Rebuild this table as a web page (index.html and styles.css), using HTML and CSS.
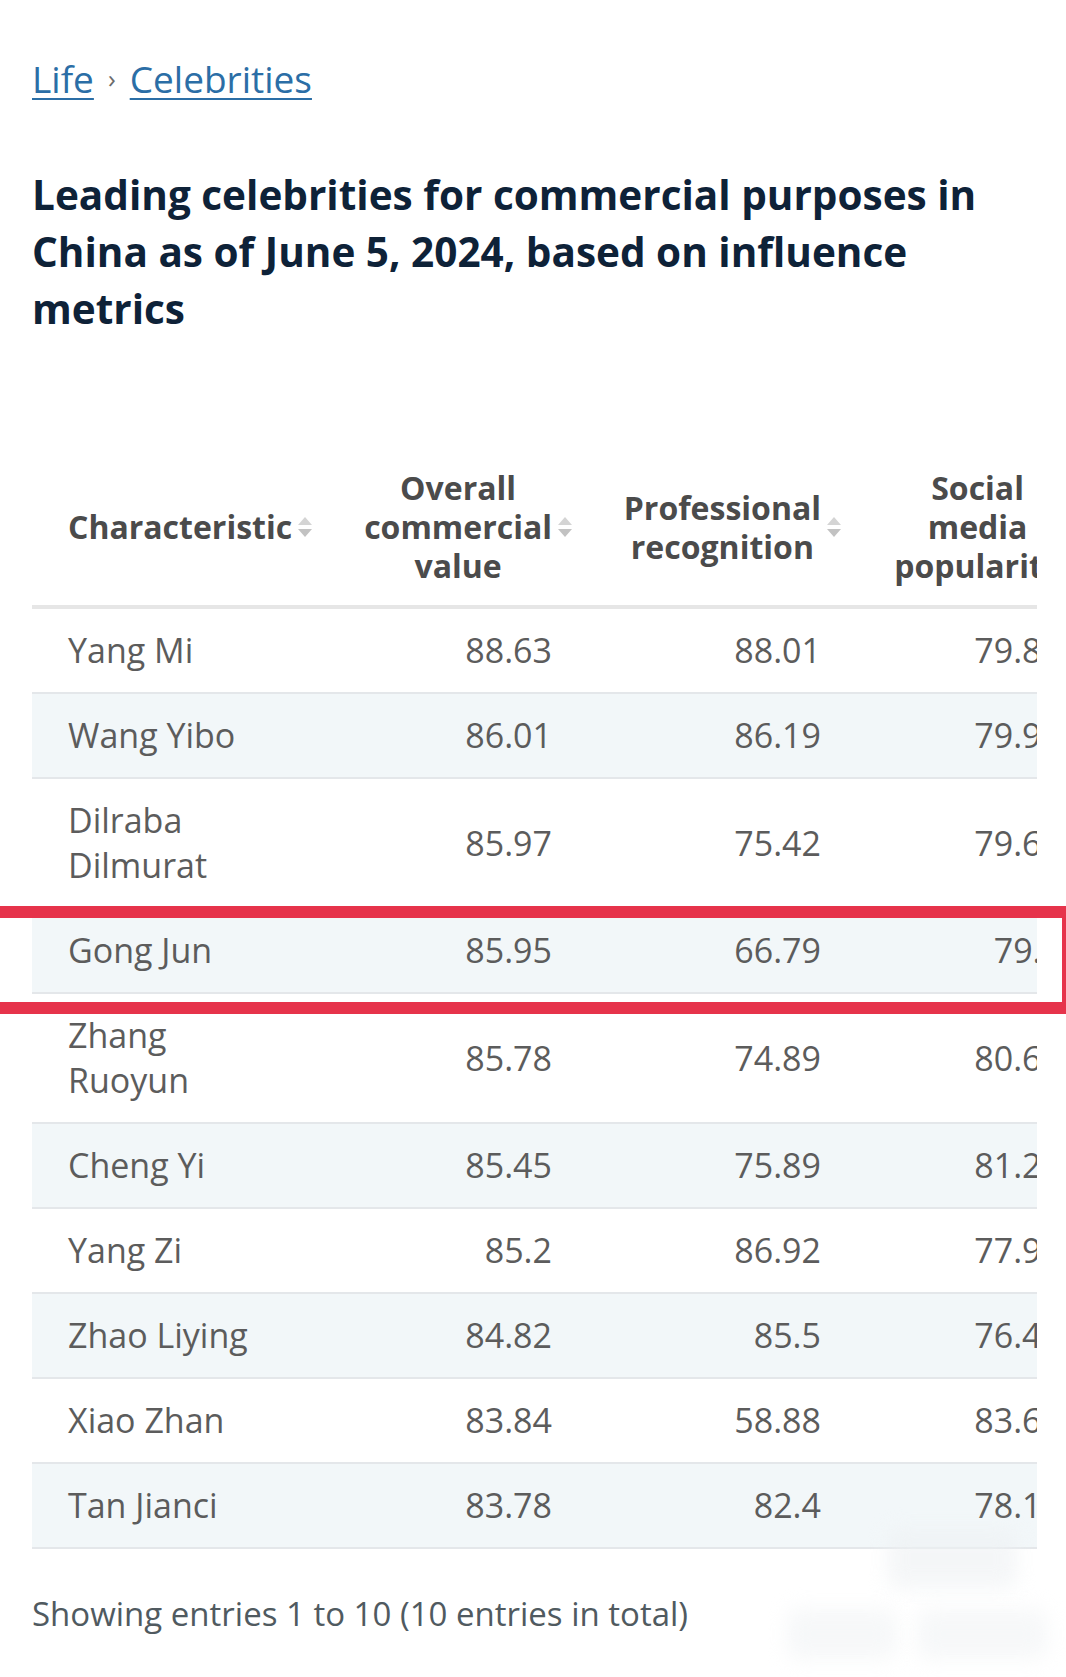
FILE: index.html
```html
<!DOCTYPE html>
<html lang="en">
<head>
<meta charset="utf-8">
<title>Leading celebrities for commercial purposes in China</title>
<link rel="stylesheet" href="styles.css">
</head>
<body>
<div class="page">
  <nav class="crumbs">
    <a href="#" class="crumb">Life</a>
    <span class="sep">›</span>
    <a href="#" class="crumb">Celebrities</a>
  </nav>

  <h1 class="title">Leading celebrities for commercial purposes in China as of June 5, 2024, based on influence metrics</h1>

  <div class="table-wrap">
    <table class="data">
      <colgroup>
        <col class="c1"><col class="c2"><col class="c3"><col class="c4">
      </colgroup>
      <thead>
        <tr>
          <th class="th-name"><div class="th-inner"><span class="th-label">Characteristic</span><svg class="sort" viewBox="0 0 18 26" width="18" height="26"><path class="up" d="M9 3 L16 11 H2 Z"/><path class="down" d="M2 15 H16 L9 23 Z"/></svg></div></th>
          <th class="th-num"><div class="th-inner"><span class="th-label">Overall<br>commercial<br>value</span><svg class="sort" viewBox="0 0 18 26" width="18" height="26"><path class="up" d="M9 3 L16 11 H2 Z"/><path class="down" d="M2 15 H16 L9 23 Z"/></svg></div></th>
          <th class="th-num"><div class="th-inner"><span class="th-label">Professional<br>recognition</span><svg class="sort" viewBox="0 0 18 26" width="18" height="26"><path class="up" d="M9 3 L16 11 H2 Z"/><path class="down" d="M2 15 H16 L9 23 Z"/></svg></div></th>
          <th class="th-num"><div class="th-inner"><span class="th-label">Social<br>media<br>popularity</span><svg class="sort" viewBox="0 0 18 26" width="18" height="26"><path class="up" d="M9 3 L16 11 H2 Z"/><path class="down" d="M2 15 H16 L9 23 Z"/></svg></div></th>
        </tr>
      </thead>
      <tbody>
        <tr><td class="name">Yang Mi</td><td>88.63</td><td>88.01</td><td>79.84</td></tr>
        <tr><td class="name">Wang Yibo</td><td>86.01</td><td>86.19</td><td>79.95</td></tr>
        <tr><td class="name">Dilraba Dilmurat</td><td>85.97</td><td>75.42</td><td>79.63</td></tr>
        <tr><td class="name">Gong Jun</td><td>85.95</td><td>66.79</td><td>79.5</td></tr>
        <tr><td class="name">Zhang Ruoyun</td><td>85.78</td><td>74.89</td><td>80.62</td></tr>
        <tr><td class="name">Cheng Yi</td><td>85.45</td><td>75.89</td><td>81.21</td></tr>
        <tr><td class="name">Yang Zi</td><td>85.2</td><td>86.92</td><td>77.93</td></tr>
        <tr><td class="name">Zhao Liying</td><td>84.82</td><td>85.5</td><td>76.44</td></tr>
        <tr><td class="name">Xiao Zhan</td><td>83.84</td><td>58.88</td><td>83.61</td></tr>
        <tr><td class="name">Tan Jianci</td><td>83.78</td><td>82.4</td><td>78.12</td></tr>
      </tbody>
    </table>
  </div>

  <div class="footer">
    <p class="entries">Showing entries 1 to 10 (10 entries in total)</p>
    <div class="pager" aria-hidden="true">
      <span class="blur b1"></span>
      <span class="blur b2"></span>
      <span class="blur b3"></span>
    </div>
  </div>

  <div class="highlight" aria-hidden="true"></div>
</div>
</body>
</html>
```

FILE: styles.css
```css
html, body {
  margin: 0;
  padding: 0;
  background: #ffffff;
}

body {
  font-family: "Open Sans", "Liberation Sans", sans-serif;
  color: #5a5a5a;
}

.page {
  position: relative;
  padding: 49px 29px 40px 32px;
  min-height: 1588px;
  overflow: hidden;
}

.crumbs {
  display: flex;
  align-items: center;
  gap: 14px;
  font-size: 37px;
  line-height: 60px;
}

.crumb {
  color: #2b6ea6;
  text-decoration: underline;
  text-decoration-thickness: 2px;
  text-underline-offset: 5px;
}

.sep {
  color: #6b6b6b;
  font-size: 26px;
  line-height: 30px;
  padding-bottom: 2px;
}

.title {
  margin: 57px 0 0 0;
  font-size: 40.5px;
  line-height: 57px;
  font-weight: 700;
  color: #0e2238;
}

.table-wrap {
  margin-top: 111px;
  width: 1005px;
  overflow: hidden;
}

.data {
  border-collapse: collapse;
  table-layout: fixed;
  width: 1066px;
}

.c1 { width: 300px; }
.c2 { width: 257px; }
.c3 { width: 269px; }
.c4 { width: 240px; }

.data th {
  padding: 20px 15px 20px 36px;
  font-size: 32px;
  line-height: 39px;
  font-weight: 700;
  color: #4b4b4b;
  vertical-align: middle;
  border-bottom: 4px solid #e6e6e6;
}

.th-inner {
  display: flex;
  align-items: center;
  gap: 4px;
}

.th-name .th-inner {
  justify-content: flex-start;
  white-space: nowrap;
}

.th-num .th-inner {
  justify-content: flex-end;
  text-align: center;
  white-space: nowrap;
}

.sort {
  flex: none;
  display: block;
}

.sort .up { fill: #d4d4d4; }
.sort .down { fill: #c2c2c2; }

.data td {
  padding: 19px 37px 19px 0;
  font-size: 34px;
  line-height: 45px;
  text-align: right;
  color: #5c5c5c;
  border-bottom: 2px solid #e4e7ea;
  white-space: nowrap;
}

.data td.name {
  text-align: left;
  padding-left: 36px;
  padding-right: 59px;
  white-space: normal;
}

.data tbody tr:nth-child(even) td {
  background: #f2f7f9;
}

.footer {
  position: relative;
  margin-top: 40px;
}

.entries {
  margin: 0;
  font-size: 33px;
  line-height: 50px;
  color: #505a60;
}

.pager {
  position: absolute;
  right: 0;
  top: -60px;
  width: 260px;
  height: 170px;
}

.blur {
  position: absolute;
  background: #eef1f3;
  filter: blur(10px);
  border-radius: 12px;
}

.b1 { left: 110px; top: 0; width: 130px; height: 60px; opacity: 0.6; }
.b2 { left: 10px; top: 80px; width: 110px; height: 50px; opacity: 0.5; }
.b3 { left: 140px; top: 80px; width: 130px; height: 50px; opacity: 0.5; }

.highlight {
  position: absolute;
  left: -20px;
  top: 906px;
  width: 1082px;
  height: 84px;
  border-top: 12px solid #e6334b;
  border-bottom: 12px solid #e6334b;
  border-right: 4px solid #e6334b;
  pointer-events: none;
}
```
